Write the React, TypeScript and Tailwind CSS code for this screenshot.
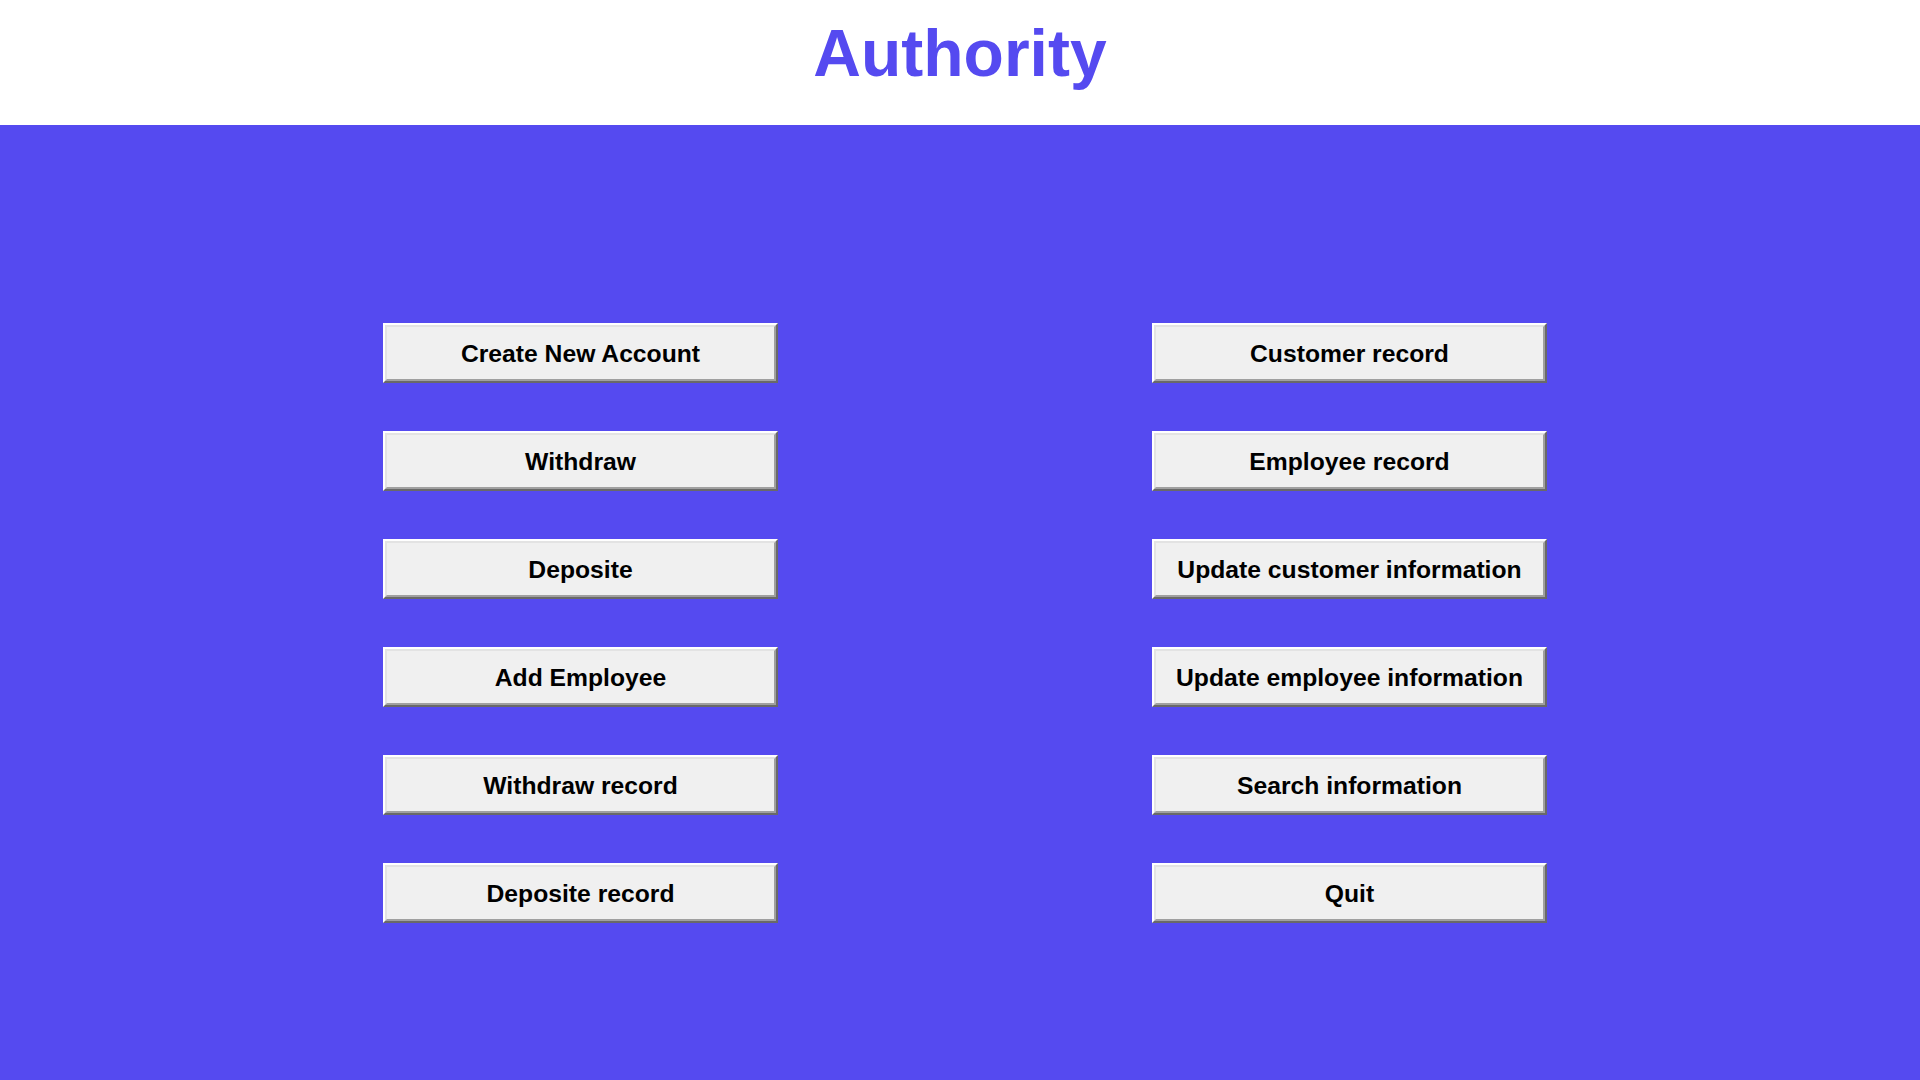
import React from 'react';

const leftButtons = [
  'Create New Account',
  'Withdraw',
  'Deposite',
  'Add Employee',
  'Withdraw record',
  'Deposite record',
];

const rightButtons = [
  'Customer record',
  'Employee record',
  'Update customer information',
  'Update employee information',
  'Search information',
  'Quit',
];

const TkButton: React.FC<{ label: string }> = ({ label }) => (
  <button className="w-[395px] h-[60px] border-2 border-t-white border-l-white border-r-[#696969] border-b-[#696969] bg-[#f0f0f0] p-0">
    <div className="w-full h-full border-2 border-t-[#e3e3e3] border-l-[#e3e3e3] border-r-[#a0a0a0] border-b-[#a0a0a0] flex items-center justify-center">
      <span className="font-['Liberation_Sans',Arial,sans-serif] font-bold text-[24.7px] text-black leading-none mt-[2px]">
        {label}
      </span>
    </div>
  </button>
);

export default function App() {
  return (
    <div className="w-[1920px] h-[1080px] flex flex-col overflow-hidden">
      <header className="h-[125px] bg-white flex items-center justify-center">
        <h1 className="font-['Liberation_Sans',Arial,sans-serif] font-bold text-[66px] leading-none text-[#554af0] mt-[-20px]">
          Authority
        </h1>
      </header>
      <main className="flex-1 bg-[#554af0] pt-[198px] pl-[383px] flex gap-[374px]">
        <div className="flex flex-col gap-[48px]">
          {leftButtons.map((b) => (
            <TkButton key={b} label={b} />
          ))}
        </div>
        <div className="flex flex-col gap-[48px]">
          {rightButtons.map((b) => (
            <TkButton key={b} label={b} />
          ))}
        </div>
      </main>
    </div>
  );
}
